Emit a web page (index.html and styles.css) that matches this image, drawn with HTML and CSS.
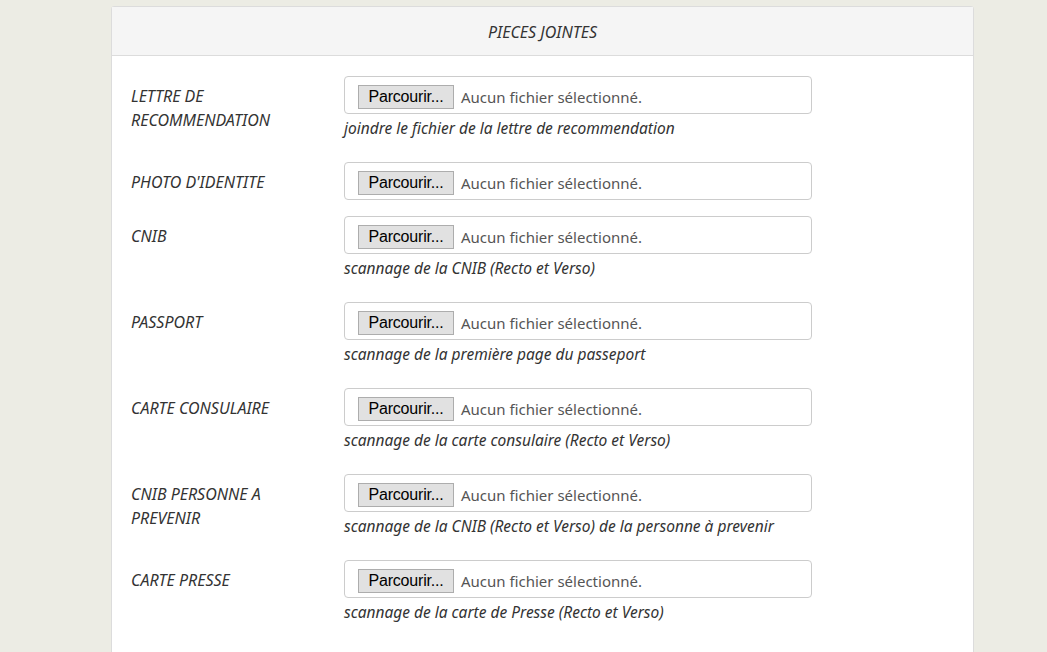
FILE: index.html
```html
<!DOCTYPE html>
<html lang="fr">
<head>
<meta charset="utf-8">
<title>Pièces jointes</title>
<link rel="stylesheet" href="styles.css">
</head>
<body>
<div class="panel">
  <div class="panel-heading">PIECES JOINTES</div>
  <div class="panel-body">
    <div class="row">
      <label class="lbl">LETTRE DE RECOMMENDATION</label>
      <div class="field">
        <div class="file"><span class="btn">Parcourir...</span><span class="none">Aucun fichier sélectionné.</span></div>
        <p class="help">joindre le fichier de la lettre de recommendation</p>
      </div>
    </div>
    <div class="row">
      <label class="lbl">PHOTO D'IDENTITE</label>
      <div class="field">
        <div class="file"><span class="btn">Parcourir...</span><span class="none">Aucun fichier sélectionné.</span></div>
      </div>
    </div>
    <div class="row">
      <label class="lbl">CNIB</label>
      <div class="field">
        <div class="file"><span class="btn">Parcourir...</span><span class="none">Aucun fichier sélectionné.</span></div>
        <p class="help">scannage de la CNIB (Recto et Verso)</p>
      </div>
    </div>
    <div class="row">
      <label class="lbl">PASSPORT</label>
      <div class="field">
        <div class="file"><span class="btn">Parcourir...</span><span class="none">Aucun fichier sélectionné.</span></div>
        <p class="help">scannage de la première page du passeport</p>
      </div>
    </div>
    <div class="row">
      <label class="lbl">CARTE CONSULAIRE</label>
      <div class="field">
        <div class="file"><span class="btn">Parcourir...</span><span class="none">Aucun fichier sélectionné.</span></div>
        <p class="help">scannage de la carte consulaire (Recto et Verso)</p>
      </div>
    </div>
    <div class="row">
      <label class="lbl">CNIB PERSONNE A PREVENIR</label>
      <div class="field">
        <div class="file"><span class="btn">Parcourir...</span><span class="none">Aucun fichier sélectionné.</span></div>
        <p class="help">scannage de la CNIB (Recto et Verso) de la personne à prevenir</p>
      </div>
    </div>
    <div class="row">
      <label class="lbl">CARTE PRESSE</label>
      <div class="field">
        <div class="file"><span class="btn">Parcourir...</span><span class="none">Aucun fichier sélectionné.</span></div>
        <p class="help">scannage de la carte de Presse (Recto et Verso)</p>
      </div>
    </div>
  </div>
</div>
</body>
</html>
```

FILE: styles.css
```css
html, body {
  margin: 0;
  padding: 0;
}
body {
  background: #ecece4;
  font-family: "Noto Sans", "Open Sans", sans-serif;
  color: #333;
  padding: 6px 0 0 111px;
}
.panel {
  width: 861px;
  background: #fff;
  border: 1px solid #dcdcdc;
  border-radius: 3px;
  min-height: 700px;
}
.panel-heading {
  height: 48px;
  line-height: 50px;
  background: #f5f5f5;
  border-bottom: 1px solid #dcdcdc;
  text-align: center;
  font-style: italic;
  font-size: 16px;
  color: #333;
}
.panel-body {
  padding: 20px 19px 0 19px;
}
.row {
  display: grid;
  grid-template-columns: 213px 468px;
  margin-bottom: 16px;
}
.lbl {
  font-style: italic;
  font-size: 16px;
  line-height: 24px;
  padding-top: 8px;
  padding-right: 40px;
  color: #333;
}
.file {
  box-sizing: border-box;
  height: 38px;
  border: 1px solid #ccc;
  border-radius: 4px;
  display: flex;
  align-items: flex-start;
  padding: 8px 0 0 13px;
}
.btn {
  box-sizing: border-box;
  height: 24px;
  width: 96px;
  background: #e1e1e1;
  border: 1px solid #adadad;
  font-family: "Liberation Sans", Arial, sans-serif;
  font-size: 16px;
  line-height: 22px;
  color: #000;
  text-align: center;
  letter-spacing: -0.2px;
}
.none {
  margin-left: 7px;
  font-size: 15px;
  line-height: 24px;
  color: #555;
}
.help {
  margin: 5px 0 9px 0;
  font-style: italic;
  font-size: 15.5px;
  line-height: 18px;
  color: #333;
}
```
